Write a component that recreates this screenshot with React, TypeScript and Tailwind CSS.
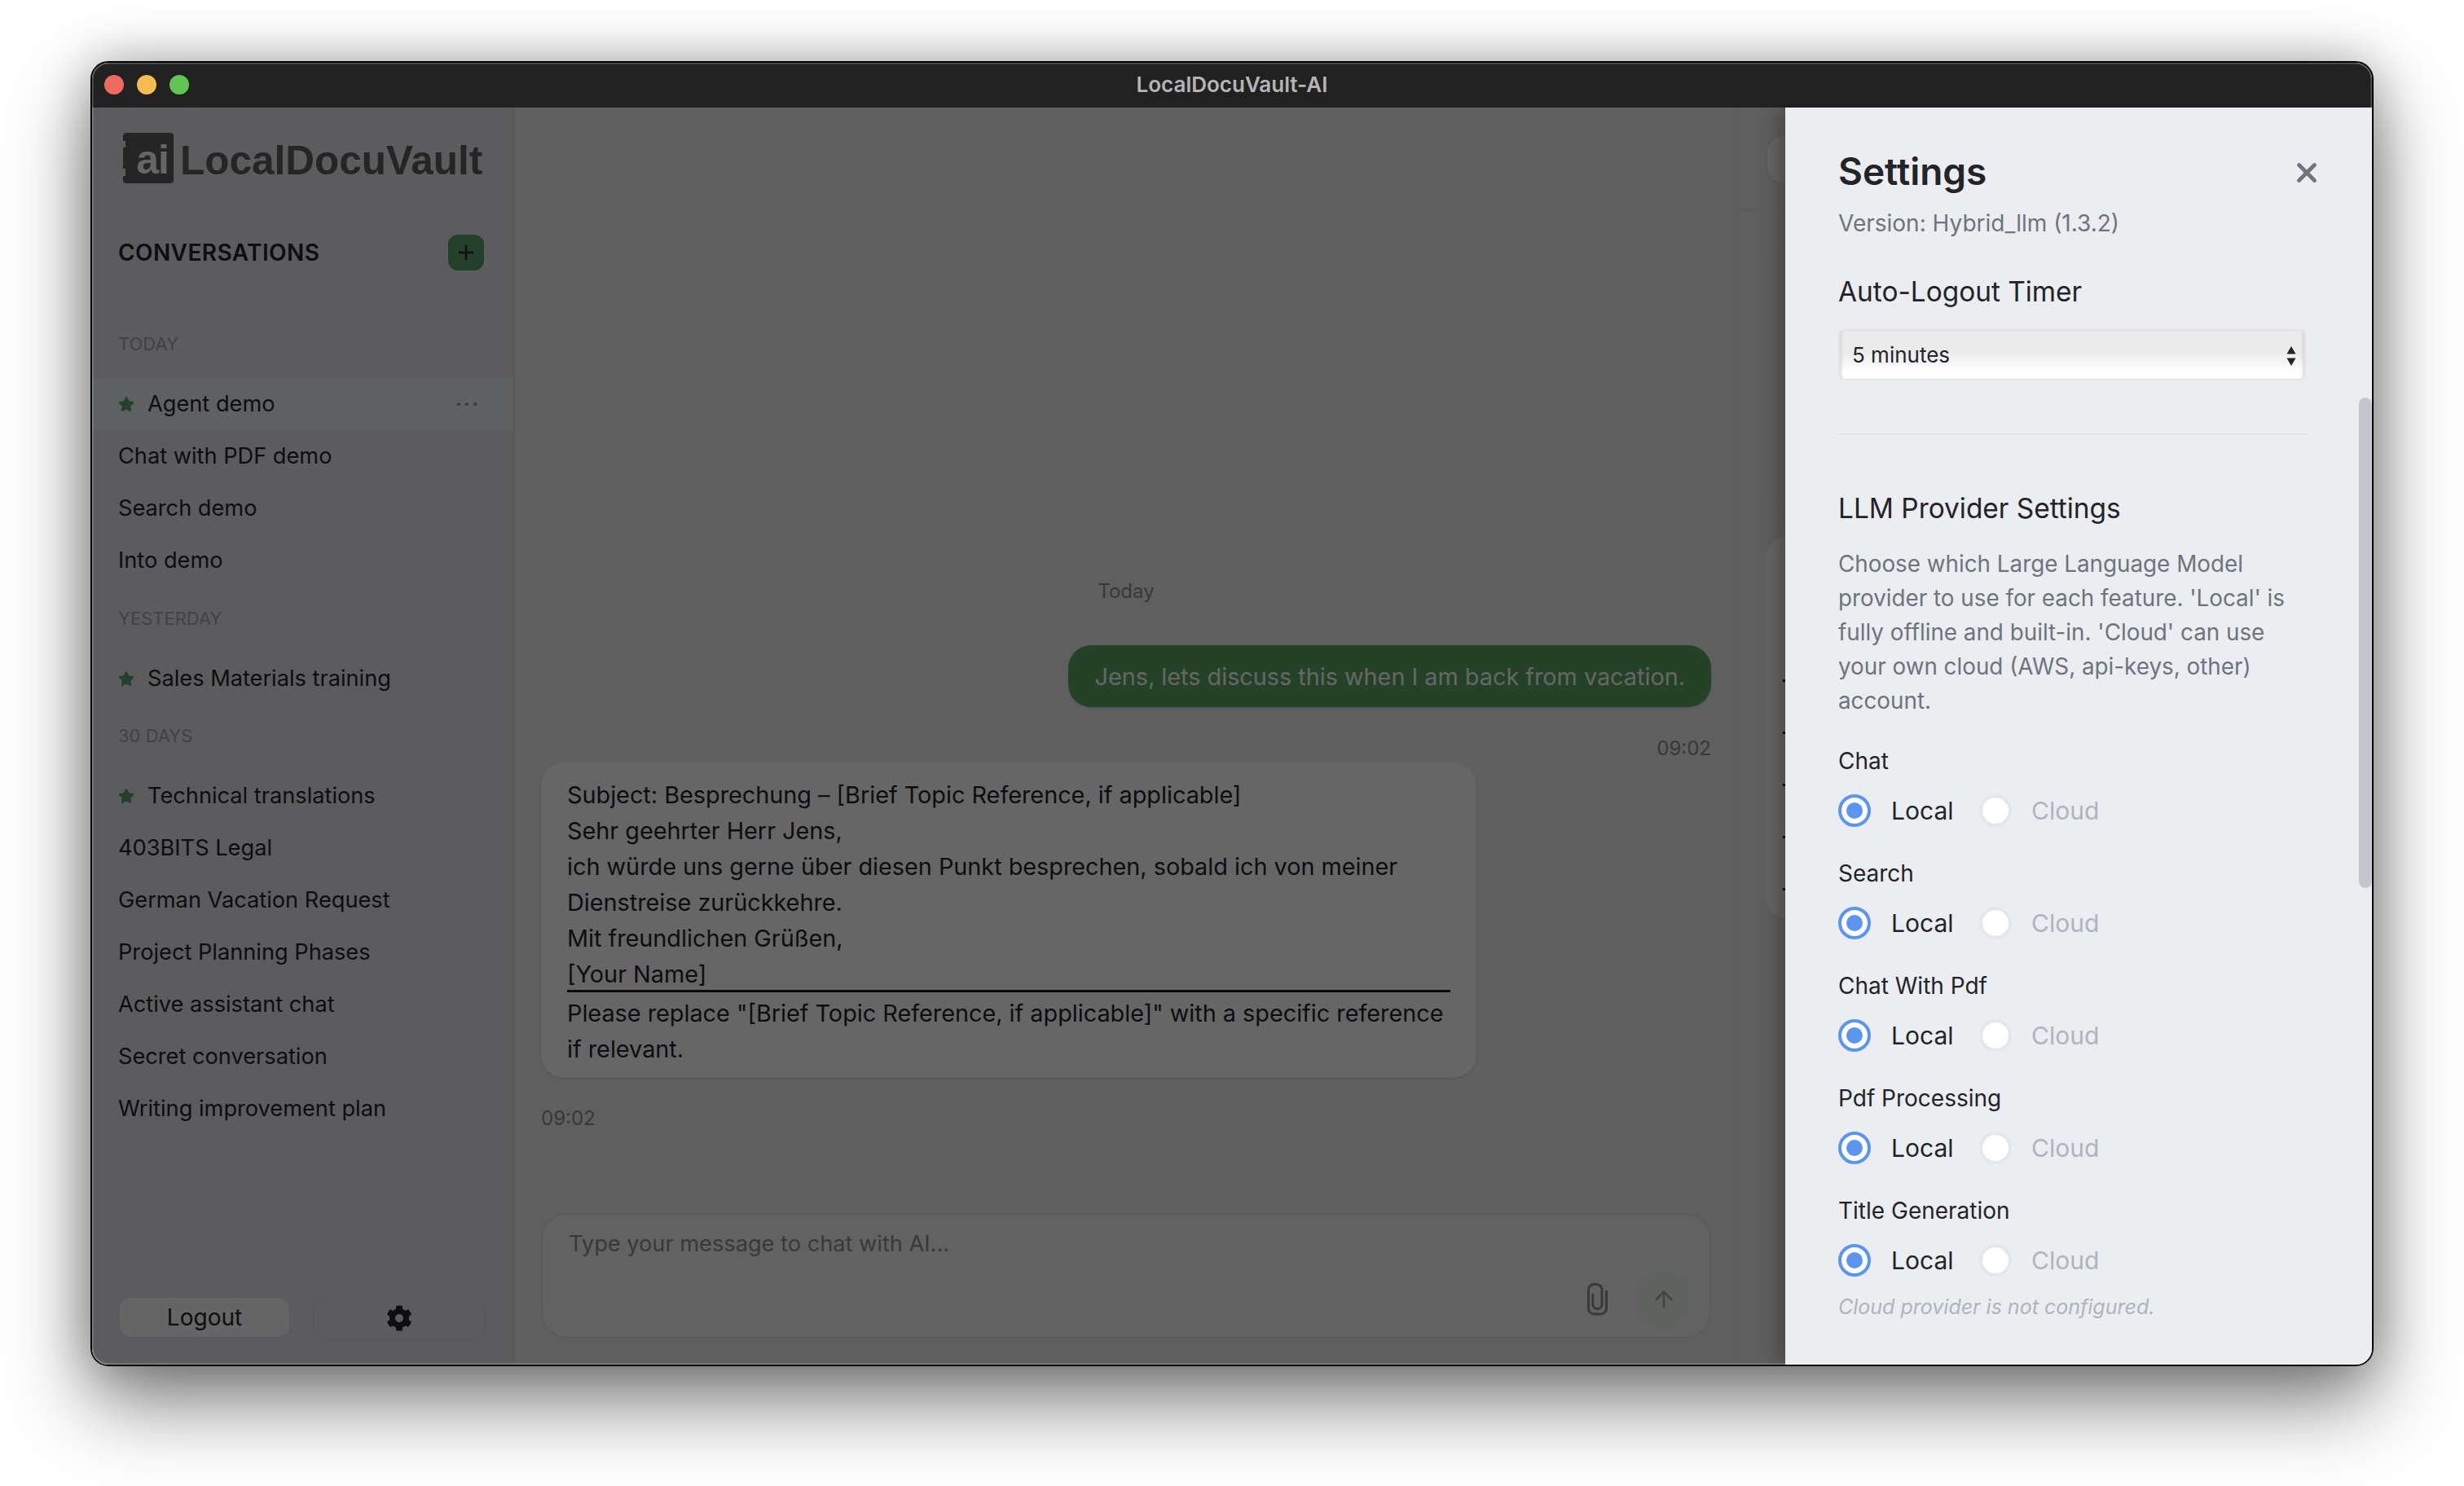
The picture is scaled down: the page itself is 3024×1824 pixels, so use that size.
import { ArrowUp, X } from "lucide-react";
import { FaCog, FaStar } from "react-icons/fa";

const FONT = "font-['Inter','Noto_Sans',sans-serif]";

const GROUPS = [
  {
    label: "TODAY",
    top: "mt-[16px]",
    items: [
      { name: "Agent demo", star: true, active: true },
      { name: "Chat with PDF demo" },
      { name: "Search demo" },
      { name: "Into demo" },
    ],
  },
  {
    label: "YESTERDAY",
    top: "mt-[24px]",
    items: [{ name: "Sales Materials training", star: true }],
  },
  {
    label: "30 DAYS",
    top: "mt-[23px]",
    items: [
      { name: "Technical translations", star: true },
      { name: "403BITS Legal" },
      { name: "German Vacation Request" },
      { name: "Project Planning Phases" },
      { name: "Active assistant chat" },
      { name: "Secret conversation" },
      { name: "Writing improvement plan" },
    ],
  },
];

const PROVIDERS = ["Chat", "Search", "Chat With Pdf", "Pdf Processing", "Title Generation"];

const EMAIL_LINES = [
  "Subject: Besprechung – [Brief Topic Reference, if applicable]",
  "Sehr geehrter Herr Jens,",
  "ich würde uns gerne über diesen Punkt besprechen, sobald ich von meiner",
  "Dienstreise zurückkehre.",
  "Mit freundlichen Grüßen,",
  "[Your Name]",
];

const CARD_ROWS = ["1", "P", "U", "A", "Y"];

function Row({ name, star, active }: { name: string; star?: boolean; active?: boolean }) {
  return (
    <div className={`flex h-[64px] items-center px-[32px] text-[27.2px] text-[#212529] ${active ? "bg-[#eef0f2]" : ""}`}>
      {star && <FaStar className="mr-[16px] h-[20px] w-[20px] shrink-0 text-[#57a069]" />}
      <span className="flex-1">{name}</span>
      {active && <span className="mr-[8px] text-[28px] leading-none tracking-[2px] text-[#8a8d90]">···</span>}
    </div>
  );
}

function Logo() {
  return (
    <div className="flex h-[129px] shrink-0 items-center border-b-[2px] border-[#e0e2e5] pb-[4px] pl-[38px]">
      <div className="relative flex h-[62px] w-[62px] items-end justify-end overflow-hidden rounded-[4px] bg-[#5c5c5c] pr-[6px] font-['Liberation_Sans',sans-serif] text-[50px] leading-[58px] font-bold tracking-[-1px] text-white">
        ai
        <span className="absolute top-[10px] left-0 h-[8px] w-[3px] bg-[#e6e6eb]" />
        <span className="absolute top-[44px] left-0 h-[9px] w-[3px] bg-[#e6e6eb]" />
      </div>
      <span className="ml-[8px] pt-[6px] font-['Liberation_Sans',sans-serif] text-[49.5px] leading-none font-bold text-[#5c5c5c]">
        LocalDocuVault
      </span>
    </div>
  );
}

function Sidebar() {
  return (
    <aside className="flex w-[519px] shrink-0 flex-col border-r-[3px] border-[#dfe1e4] bg-[#e6e6eb]">
      <Logo />
      <div className="mt-[27px] flex h-[44px] shrink-0 items-center justify-between pr-[35px] pl-[32px]">
        <span className="text-[28px] font-semibold tracking-[0.4px] text-[#212529]">CONVERSATIONS</span>
        <button className="flex h-[44px] w-[44px] items-center justify-center rounded-[12px] bg-[#57a069] text-[#212529]">
          <svg width="20" height="20" viewBox="0 0 20 20" fill="none" stroke="currentColor" strokeWidth="2.6">
            <path d="M10 1v18M1 10h18" />
          </svg>
        </button>
      </div>
      <div className="flex-1 pt-[59px]">
        {GROUPS.map((g) => (
          <div key={g.label} className={g.top}>
            <div className="mb-[27px] h-[30px] pl-[32px] text-[22px] leading-[30px] text-[#a3a6aa]">{g.label}</div>
            {g.items.map((item) => (
              <Row key={item.name} {...item} />
            ))}
          </div>
        ))}
      </div>
      <div className="flex h-[119px] shrink-0 items-start justify-between border-t-[2px] border-[#e0e2e5] pt-[33px] pr-[33px] pl-[32px]">
        <button className="h-[52px] w-[212px] rounded-[16px] border-[2px] border-[#e2e4e6] bg-[#fcfcfc] text-[28px] text-[#212529]">
          Logout
        </button>
        <button className="flex h-[54px] w-[212px] items-center justify-center rounded-[16px] border-[2px] border-[#dcdee1] text-[#212529]">
          <FaCog className="h-[32px] w-[32px]" />
        </button>
      </div>
    </aside>
  );
}

function Chat() {
  return (
    <main className="flex w-[1501px] shrink-0 flex-col border-r-[2px] border-[#e6e8ea] bg-[#eeeef0] pr-[31px] pl-[32px]">
      <div className="mt-[575px] h-[38px] shrink-0 text-center text-[24px] leading-[38px] text-[#8a8d92]">Today</div>
      <div className="mt-[47px] flex shrink-0 justify-end">
        <div className="rounded-[28px] bg-[#5aa564] px-[32px] pt-[20px] pb-[18px] text-[28.8px] leading-[38px] text-white shadow-sm">
          Jens, lets discuss this when I am back from vacation.
        </div>
      </div>
      <div className="mt-[34px] shrink-0 text-right text-[24px] leading-[34px] text-[#8a8d92]">09:02</div>
      <div className="w-[1148px] shrink-0 rounded-[28px] bg-white px-[32px] pt-[18px] pb-[13px] text-[28.8px] leading-[44px] text-[#212529] shadow-sm">
        {EMAIL_LINES.map((line) => (
          <div key={line}>{line}</div>
        ))}
        <div className="mt-[-3px] mb-[4px] h-[3px] bg-[#212529]" />
        <div>Please replace "[Brief Topic Reference, if applicable]" with a specific reference</div>
        <div>if relevant.</div>
      </div>
      <div className="mt-[33px] shrink-0 text-[24px] leading-[34px] text-[#8a8d92]">09:02</div>
      <div className="relative mt-[99px] h-[154px] w-[1436px] shrink-0 rounded-[32px] border-[2px] border-[#e2e4e6] bg-[#f4f5f7] px-[32px] pt-[18px] text-[27.2px] leading-[36px] text-[#8c8f93]">
        Type your message to chat with AI...
        <div className="absolute right-[25px] bottom-[14px] flex items-center gap-[38px]">
          <svg width="25" height="40" viewBox="0 0 25 40" fill="none" stroke="#8f9196" strokeWidth="3" strokeLinecap="round">
            <path d="M23.5 10v21a7 7 0 0 1-7 7h-8a7 7 0 0 1-7-7V8a6.5 6.5 0 0 1 6.5-6.5h3.5A6.5 6.5 0 0 1 18 8v18a5.6 5.6 0 0 1-11.2 0V14" />
          </svg>
          <button className="flex h-[64px] w-[62px] items-center justify-center rounded-full bg-[#eef8ee]">
            <ArrowUp className="h-[32px] w-[32px]" color="#a8aaac" strokeWidth={2} />
          </button>
        </div>
      </div>
    </main>
  );
}

function SidePanel() {
  return (
    <div className="flex-1 bg-[#eeeef0]">
      <div className="h-[126px] border-b-[2px] border-[#e6e8ea] pt-[32px] pl-[34px]">
        <div className="h-[63px] w-[700px] rounded-[24px] border-[2px] border-[#e4e6e8] bg-white" />
      </div>
      <div className="mt-[44px] ml-[34px] h-[323px] w-[700px] rounded-[24px] border-[2px] border-[#e6e8ea]" />
      <div className="mt-[33px] ml-[34px] h-[470px] w-[700px] rounded-[28px] bg-white pt-[115px] pl-[21px] text-[28px] leading-[28px] text-[#212529]">
        {CARD_ROWS.map((r) => (
          <div key={r} className="flex h-[64px] items-end border-b-[3px] border-[#212529] pb-[2px] pl-[2px]">
            {r}
          </div>
        ))}
      </div>
    </div>
  );
}

function Radio({ on, label }: { on?: boolean; label: string }) {
  return (
    <div className="flex items-center">
      <span
        className={`flex h-[40px] w-[40px] items-center justify-center rounded-full border-[4px] bg-white ${on ? "border-[#5b95f0]" : "border-[#e4e6ea]"}`}
      >
        {on && <span className="h-[20px] w-[20px] rounded-full bg-[#5b95f0]" />}
      </span>
      <span className={`text-[30px] leading-[40px] ${on ? "ml-[25px] w-[84px] text-[#212529]" : "ml-[24px] text-[#adb5bd]"}`}>{label}</span>
    </div>
  );
}

function SettingsPanel() {
  return (
    <div className="absolute top-0 right-0 bottom-0 z-20 w-[720px] overflow-hidden bg-[#ebedf1] pt-[46px] pr-[80px] pl-[65px] shadow-[-8px_0_24px_rgba(0,0,0,0.28)]">
      <div className="flex items-center justify-between">
        <h2 className="text-[46px] leading-[64px] font-semibold text-[#212529]">Settings</h2>
        <X className="mt-[4px] mr-[-19px] h-[38px] w-[38px] text-[#6c757d]" strokeWidth={3} />
      </div>
      <div className="mt-[14px] text-[28px] leading-[36px] text-[#6c757d]">Version: Hybrid_llm (1.3.2)</div>
      <div className="mt-[44px] text-[33.4px] leading-[44px] text-[#212529]">Auto-Logout Timer</div>
      <div className="relative mt-[24px] flex h-[63px] w-[574px] items-center rounded-[6px] border-[2px] border-[#e2e4e8] bg-[linear-gradient(#ebebeb_0%,#ebebeb_45%,#ffffff_85%)] pl-[15px] text-[26px] text-[#212529] shadow-[inset_4px_0_4px_-3px_#c9c9c9,inset_-4px_0_4px_-3px_#c9c9c9]">
        5 minutes
        <svg className="absolute top-[19px] right-[10px]" width="12" height="24" viewBox="0 0 12 24" fill="#212529">
          <path d="M6 0l5.5 9.5H.5zM6 24L.5 14.5h11z" />
        </svg>
      </div>
      <div className="mt-[65px] h-[2px] w-[576px] bg-[#e1e3e6]" />
      <div className="mt-[68px] text-[33.4px] leading-[44px] text-[#212529]">LLM Provider Settings</div>
      <p className="mt-[25px] w-[580px] text-[27.8px] leading-[42px] text-[#6c757d]">
        Choose which Large Language Model provider to use for each feature. 'Local' is fully offline and built-in. 'Cloud' can use your own cloud (AWS, api-keys, other) account.
      </p>
      <div className="mt-[35px] flex flex-col gap-[39px]">
        {PROVIDERS.map((p) => (
          <div key={p}>
            <div className="text-[28px] leading-[36px] text-[#212529]">{p}</div>
            <div className="mt-[23px] flex items-center gap-[24px]">
              <Radio on label="Local" />
              <Radio label="Cloud" />
            </div>
          </div>
        ))}
      </div>
      <div className="mt-[20px] text-[25px] leading-[34px] text-[#adb5bd] italic">Cloud provider is not configured.</div>
      <div className="absolute top-[356px] right-0 h-[602px] w-[16px] rounded-[8px] bg-[#c2c7cb]" />
    </div>
  );
}

export default function App() {
  return (
    <div className={`h-[1824px] w-[3024px] overflow-hidden bg-white pt-[75px] pl-[111px] ${FONT}`}>
      <div className="relative flex h-[1602px] w-[2802px] flex-col overflow-hidden rounded-[22px] border-[2px] border-black shadow-[0_44px_100px_rgba(0,0,0,0.5),0_0_60px_rgba(0,0,0,0.25)]">
        <header className="relative flex h-[55px] shrink-0 items-center justify-center bg-[#212121] pb-[3px]">
          <div className="absolute top-[15px] left-[15px] flex gap-[16px]">
            <span className="h-[24px] w-[24px] rounded-full bg-[#ee6a5f]" />
            <span className="h-[24px] w-[24px] rounded-full bg-[#f5bd4f]" />
            <span className="h-[24px] w-[24px] rounded-full bg-[#61c454]" />
          </div>
          <span className="text-[26px] font-semibold text-[#b5b5b5]">LocalDocuVault-AI</span>
        </header>
        <div className="relative flex flex-1 overflow-hidden">
          <Sidebar />
          <Chat />
          <SidePanel />
          <div className="absolute inset-0 z-10 bg-black/60" />
          <SettingsPanel />
        </div>
        <div className="pointer-events-none absolute inset-0 z-30 rounded-[20px] shadow-[inset_0_0_0_1.5px_rgba(255,255,255,0.25)]" />
      </div>
    </div>
  );
}
